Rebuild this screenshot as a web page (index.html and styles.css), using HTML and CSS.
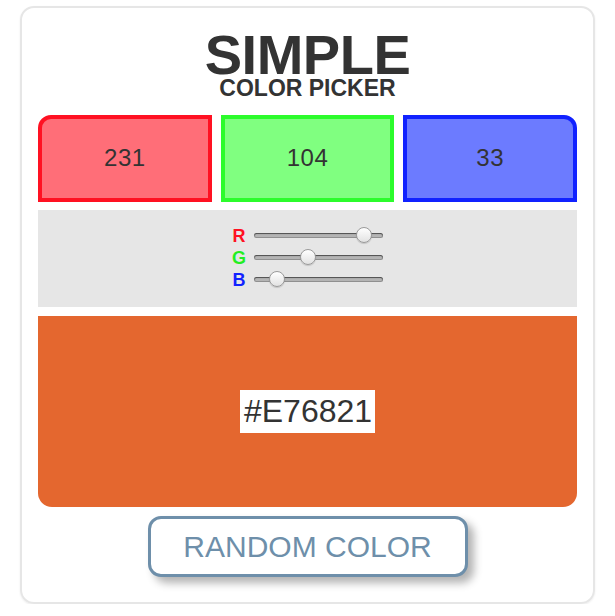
FILE: index.html
```html
<!DOCTYPE html>
<html lang="en">
<head>
<meta charset="utf-8">
<title>Simple Color Picker</title>
<link rel="stylesheet" href="styles.css">
</head>
<body>
<main class="card">
  <header class="head">
    <h1 class="title">SIMPLE</h1>
    <p class="subtitle">COLOR PICKER</p>
  </header>
  <section class="channels">
    <div class="chan chan-r">231</div>
    <div class="chan chan-g">104</div>
    <div class="chan chan-b">33</div>
  </section>
  <section class="sliders">
    <div class="rows">
      <label class="row"><span class="lbl lbl-r">R</span><input class="range" type="range" min="0" max="255" value="231"></label>
      <label class="row"><span class="lbl lbl-g">G</span><input class="range" type="range" min="0" max="255" value="104"></label>
      <label class="row"><span class="lbl lbl-b">B</span><input class="range" type="range" min="0" max="255" value="33"></label>
    </div>
  </section>
  <section class="preview">
    <span class="hex">#E76821</span>
  </section>
  <div class="actions">
    <button class="btn" type="button">RANDOM COLOR</button>
  </div>
</main>
</body>
</html>
```
FILE: styles.css
```css
* { box-sizing: border-box; }
html, body { margin: 0; padding: 0; background: #fff; }
body { font-family: "Liberation Sans", Arial, sans-serif; color: #333; }

.card {
  width: 575px;
  margin: 6px 0 0 20px;
  border: 2px solid #e6e6e6;
  border-radius: 14px;
  box-shadow: 0 1px 2px rgba(0,0,0,0.08);
  padding: 23px 16px 25px;
  display: flex;
  flex-direction: column;
}

.head { text-align: center; }
.title {
  margin: 0;
  font-size: 56px;
  line-height: 48px;
  font-weight: bold;
  letter-spacing: -0.5px;
  color: #333;
}
.subtitle {
  margin: 0;
  font-size: 23px;
  line-height: 19px;
  font-weight: bold;
  color: #333;
}

.channels {
  margin-top: 17px;
  display: grid;
  grid-template-columns: 1fr 1fr 1fr;
  gap: 9px;
}
.chan {
  height: 87px;
  border: 4px solid;
  display: flex;
  align-items: center;
  justify-content: center;
  font-size: 24px;
  letter-spacing: 0.5px;
  color: #333;
  padding-bottom: 2px;
}
.chan-r { background: #ff6e78; border-color: #ff1122; border-top-left-radius: 13px; }
.chan-g { background: #80ff80; border-color: #2cfc2c; }
.chan-b { background: #6c7bff; border-color: #1122ff; border-top-right-radius: 13px; }

.sliders {
  margin-top: 8px;
  height: 97px;
  background: #e6e6e6;
  display: flex;
  align-items: center;
  justify-content: center;
  padding-bottom: 3px;
}
.rows { display: flex; flex-direction: column; }
.row {
  display: flex;
  align-items: center;
  height: 22px;
  gap: 8px;
}
.lbl {
  width: 14px;
  font-size: 18px;
  font-weight: bold;
  text-align: center;
  line-height: 22px;
  padding-top: 2px;
}
.lbl-r { color: #ff1122; }
.lbl-g { color: #22ee22; }
.lbl-b { color: #1122ff; }

.range {
  -webkit-appearance: none;
  appearance: none;
  width: 129px;
  height: 22px;
  margin: 0;
  background: transparent;
}
.range::-webkit-slider-runnable-track {
  height: 5px;
  border-radius: 3px;
  background: #b4b4b4;
  box-shadow: inset 0 1px 1px rgba(0,0,0,0.45), inset 0 0 0 1px rgba(0,0,0,0.2);
}
.range::-webkit-slider-thumb {
  -webkit-appearance: none;
  appearance: none;
  box-sizing: border-box;
  width: 16px;
  height: 16px;
  margin-top: -5.5px;
  border-radius: 50%;
  border: 1px solid #9a9a9a;
  background: linear-gradient(#ffffff, #e2e2e2);
  box-shadow: 0 1px 1px rgba(0,0,0,0.15);
}

.preview {
  margin-top: 9px;
  height: 191px;
  background: #e4672f;
  border-bottom-left-radius: 14px;
  border-bottom-right-radius: 14px;
  display: flex;
  align-items: center;
  justify-content: center;
}
.hex {
  background: #fff;
  color: #333;
  font-size: 32px;
  line-height: 37px;
  padding: 3px 3px 3px 4px;
}

.actions {
  margin-top: 9px;
  display: flex;
  justify-content: center;
}
.btn {
  width: 320px;
  height: 61px;
  border: 3px solid #6e8faa;
  border-radius: 13px;
  background: #fff;
  color: #6e8faa;
  font-family: "Liberation Sans", Arial, sans-serif;
  font-size: 30px;
  padding: 0;
  box-shadow: 6px 6px 8px rgba(0,0,0,0.3);
  cursor: pointer;
}
```
